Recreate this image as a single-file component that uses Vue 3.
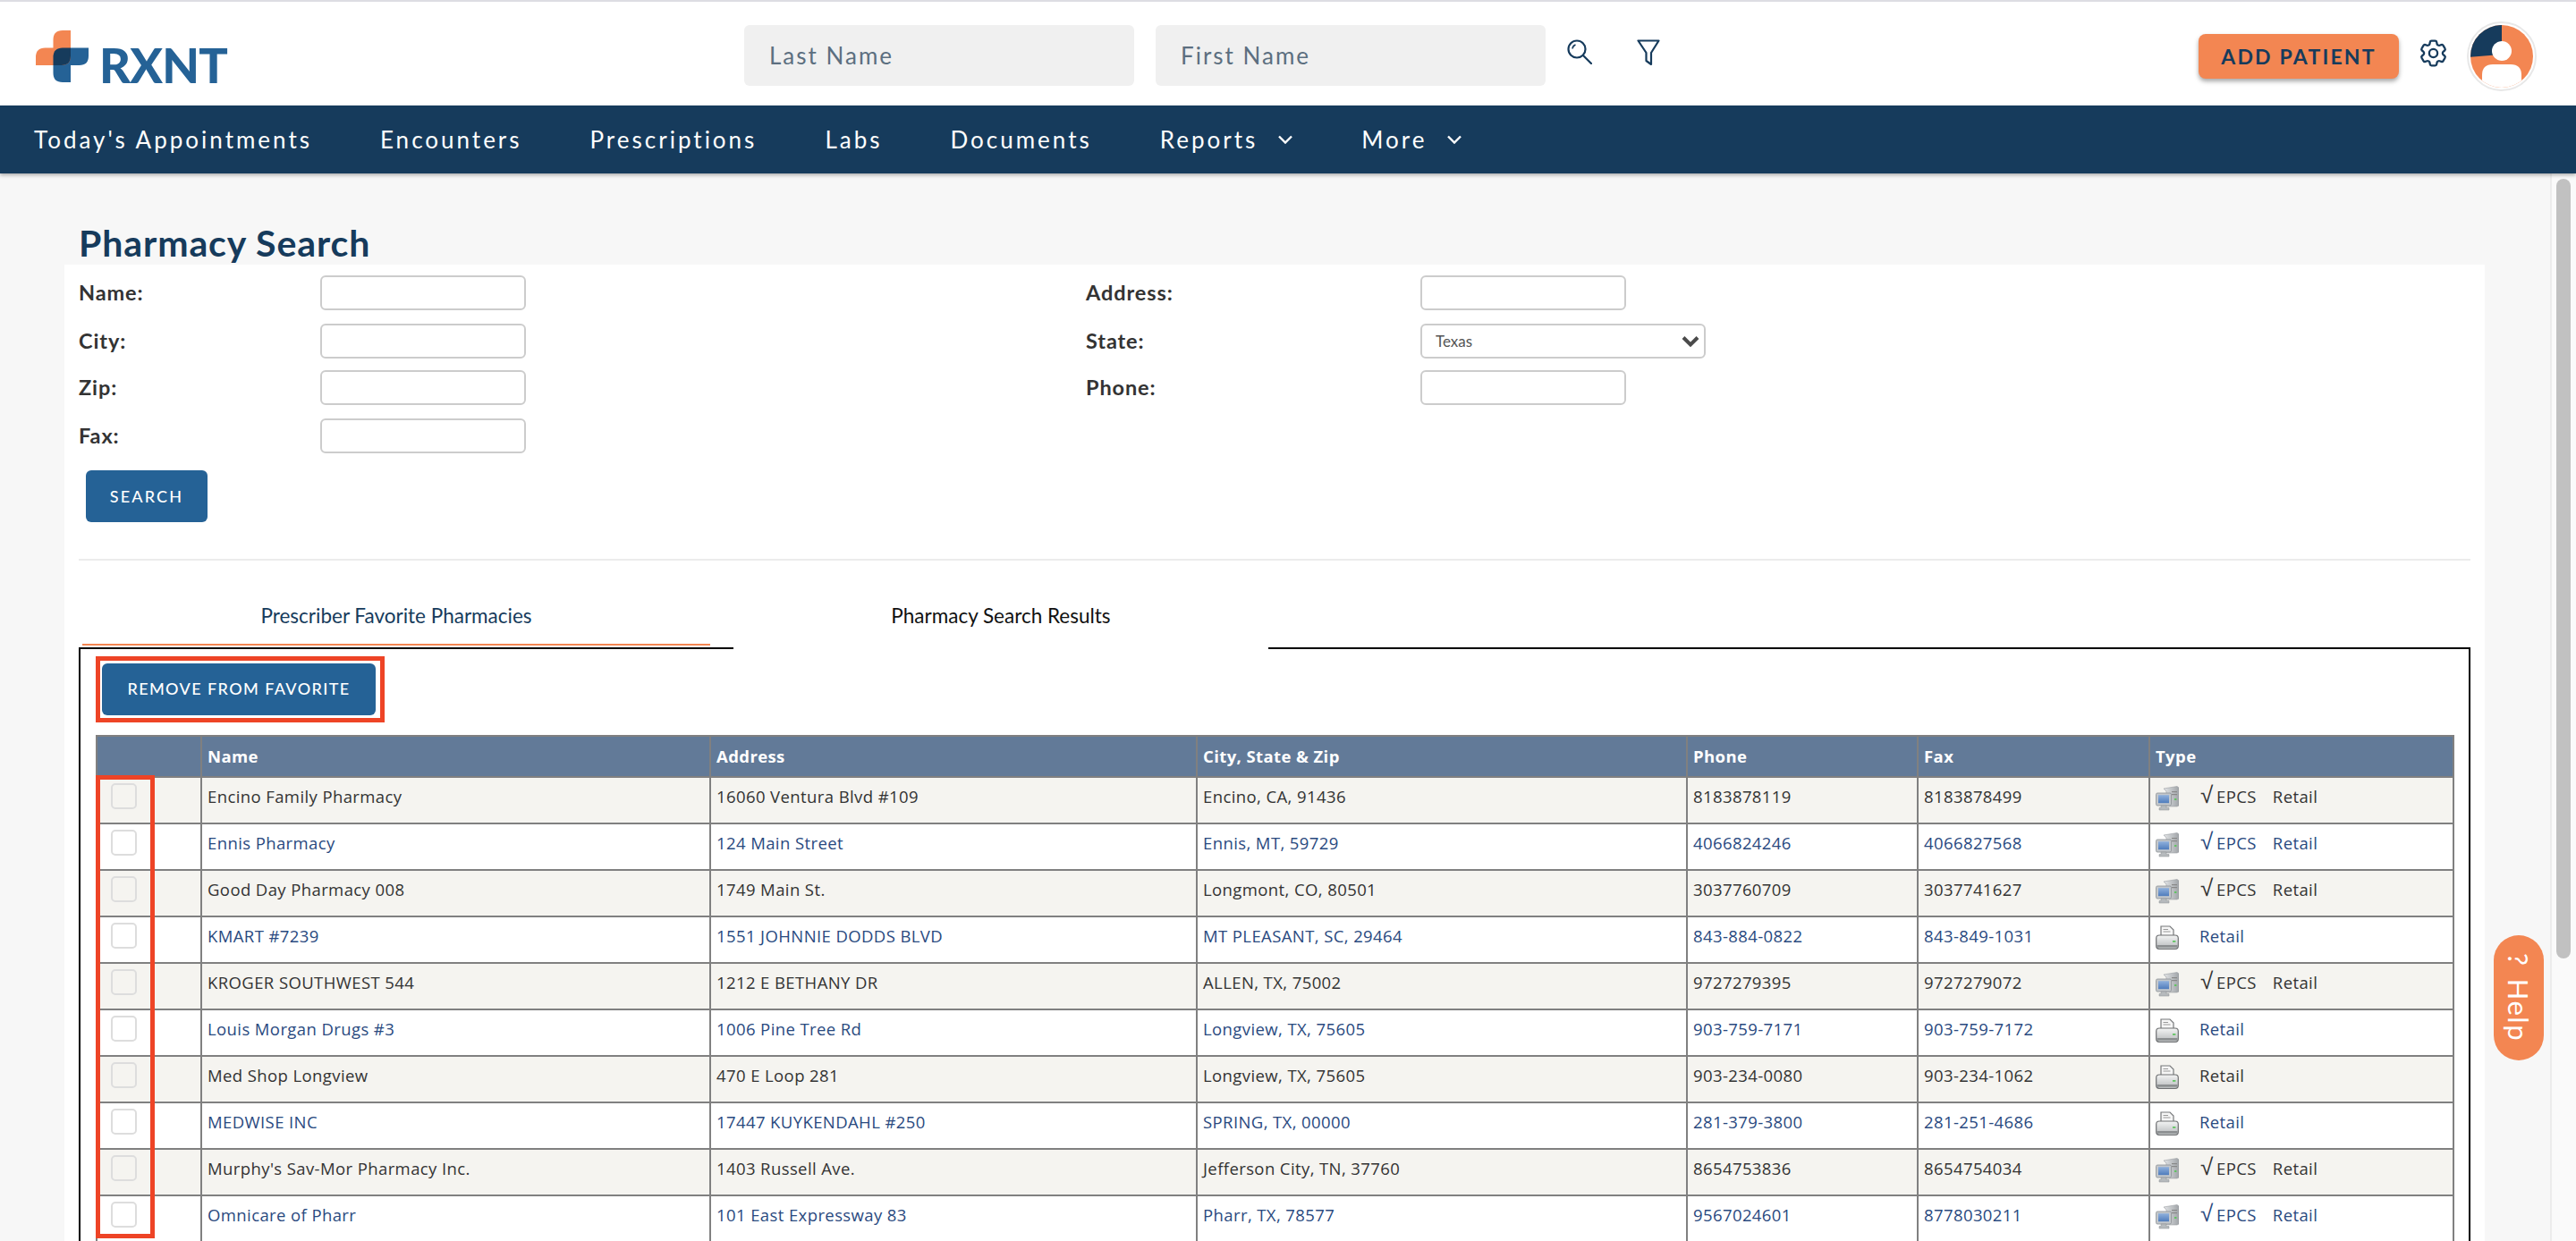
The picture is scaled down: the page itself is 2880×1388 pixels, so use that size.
<script setup>
const navItems = [
  { label: "Today's Appointments" },
  { label: "Encounters" },
  { label: "Prescriptions" },
  { label: "Labs" },
  { label: "Documents" },
  { label: "Reports", menu: true },
  { label: "More", menu: true }
];

const pharmacies = [
  { name: "Encino Family Pharmacy", address: "16060 Ventura Blvd #109", city: "Encino, CA, 91436", phone: "8183878119", fax: "8183878499", epcs: true },
  { name: "Ennis Pharmacy", address: "124 Main Street", city: "Ennis, MT, 59729", phone: "4066824246", fax: "4066827568", epcs: true },
  { name: "Good Day Pharmacy 008", address: "1749 Main St.", city: "Longmont, CO, 80501", phone: "3037760709", fax: "3037741627", epcs: true },
  { name: "KMART #7239", address: "1551 JOHNNIE DODDS BLVD", city: "MT PLEASANT, SC, 29464", phone: "843-884-0822", fax: "843-849-1031", epcs: false },
  { name: "KROGER SOUTHWEST 544", address: "1212 E BETHANY DR", city: "ALLEN, TX, 75002", phone: "9727279395", fax: "9727279072", epcs: true },
  { name: "Louis Morgan Drugs #3", address: "1006 Pine Tree Rd", city: "Longview, TX, 75605", phone: "903-759-7171", fax: "903-759-7172", epcs: false },
  { name: "Med Shop Longview", address: "470 E Loop 281", city: "Longview, TX, 75605", phone: "903-234-0080", fax: "903-234-1062", epcs: false },
  { name: "MEDWISE INC", address: "17447 KUYKENDAHL #250", city: "SPRING, TX, 00000", phone: "281-379-3800", fax: "281-251-4686", epcs: false },
  { name: "Murphy's Sav-Mor Pharmacy Inc.", address: "1403 Russell Ave.", city: "Jefferson City, TN, 37760", phone: "8654753836", fax: "8654754034", epcs: true },
  { name: "Omnicare of Pharr", address: "101 East Expressway 83", city: "Pharr, TX, 78577", phone: "9567024601", fax: "8778030211", epcs: true }
];
</script>

<template>
  <div class="app">
    <!-- Header -->
    <header class="topbar">
      <div class="logo">
        <svg class="logo-mark" viewBox="0 0 59 58" width="59" height="58">
          <path d="M30 19.5H59V28.5Q59 39 48.5 39H39V58H30Q19.5 58 19.5 47.5V30Q19.5 19.5 30 19.5Z" fill="#256296" />
          <path d="M0 39V30Q0 19.5 10.5 19.5H19.5V10.5Q19.5 0 30 0H39V28.5Q39 39 28.5 39Z" fill="#f38652" />
          <path d="M19.5 39V30Q19.5 19.5 30 19.5H39V28.5Q39 39 28.5 39Z" fill="#163b5c" />
        </svg>
        <span class="logo-text">RXNT</span>
      </div>
      <input class="top-input" placeholder="Last Name" />
      <input class="top-input" placeholder="First Name" />
      <svg class="top-icon search-icon" viewBox="0 0 28 28" width="28" height="28" fill="none" stroke="#163b5c" stroke-width="2.2">
        <circle cx="11" cy="11" r="9.5" />
        <path d="M18 18L27 27" stroke-linecap="round" />
        <path d="M6 10.5Q6.5 7 9.5 6" stroke-width="1.6" />
      </svg>
      <svg class="top-icon filter-icon" viewBox="0 0 26 30" width="26" height="30" fill="none" stroke="#163b5c" stroke-width="2.2" stroke-linejoin="round">
        <path d="M1.5 1.5H24.5L16 15V28L10.5 24V15Z" />
      </svg>
      <div class="top-right">
        <button class="add-btn">ADD PATIENT</button>
        <svg class="gear" viewBox="0 0 24 24" width="37" height="37" fill="none" stroke="#163b5c" stroke-width="1.5">
          <path d="M9.594 3.94c.09-.542.56-.94 1.11-.94h2.593c.55 0 1.02.398 1.11.94l.213 1.281c.063.374.313.686.645.87.074.04.147.083.22.127.325.196.72.257 1.075.124l1.217-.456a1.125 1.125 0 0 1 1.37.49l1.296 2.247a1.125 1.125 0 0 1-.26 1.431l-1.003.827c-.293.241-.438.613-.43.992a7.723 7.723 0 0 1 0 .255c-.008.378.137.75.43.991l1.004.827c.424.35.534.955.26 1.43l-1.298 2.247a1.125 1.125 0 0 1-1.369.491l-1.217-.456c-.355-.133-.75-.072-1.076.124a6.47 6.47 0 0 1-.22.128c-.331.183-.581.495-.644.869l-.213 1.281c-.09.543-.56.94-1.11.94h-2.594c-.55 0-1.019-.398-1.11-.94l-.213-1.281c-.062-.374-.312-.686-.644-.87a6.52 6.52 0 0 1-.22-.127c-.325-.196-.72-.257-1.076-.124l-1.217.456a1.125 1.125 0 0 1-1.369-.49l-1.297-2.247a1.125 1.125 0 0 1 .26-1.431l1.004-.827c.292-.24.437-.613.43-.991a6.932 6.932 0 0 1 0-.255c.007-.38-.138-.751-.43-.992l-1.004-.827a1.125 1.125 0 0 1-.26-1.43l1.297-2.247a1.125 1.125 0 0 1 1.37-.491l1.216.456c.356.133.751.072 1.076-.124.072-.044.146-.086.22-.128.332-.183.582-.495.644-.869l.214-1.28Z" />
          <path d="M15 12a3 3 0 1 1-6 0 3 3 0 0 1 6 0Z" />
        </svg>
        <svg class="avatar" viewBox="0 0 78 78" width="78" height="78">
          <defs>
            <clipPath id="avatarClip"><circle cx="39" cy="39" r="35" /></clipPath>
          </defs>
          <circle cx="39" cy="39" r="38" fill="#fff" stroke="#e8e8e8" stroke-width="2" />
          <g clip-path="url(#avatarClip)">
            <rect width="78" height="78" fill="#f38652" />
            <path d="M39 0H0V40L39 37Z" fill="#163b5c" />
            <circle cx="39" cy="33" r="11" fill="#fff" />
            <path d="M17 78V60Q17 48 29 48H49Q61 48 61 60V78Z" fill="#fff" />
          </g>
        </svg>
      </div>
    </header>

    <nav class="navbar">
      <a v-for="item in navItems" :key="item.label" class="nav-item">
        {{ item.label }}
        <svg v-if="item.menu" class="nav-caret" viewBox="0 0 18 10" width="18" height="10" fill="none" stroke="#fff" stroke-width="2.4">
          <path d="M2 1.5L9 8.5L16 1.5" />
        </svg>
      </a>
    </nav>

    <div class="content">
      <main class="page">
        <h1 class="page-title">Pharmacy Search</h1>
        <section class="panel">
          <!-- Search form -->
          <div class="search-form">
            <label>Name:</label>
            <input class="field" />
            <label>Address:</label>
            <input class="field" />

            <label>City:</label>
            <input class="field" />
            <label>State:</label>
            <div class="select-wrap">
              <select class="field state">
                <option>Texas</option>
              </select>
              <svg class="select-caret" viewBox="0 0 20 14" width="20" height="14" fill="none" stroke="#4a4a4a" stroke-width="4">
                <path d="M2 2.5L10 10.5L18 2.5" />
              </svg>
            </div>

            <label>Zip:</label>
            <input class="field" />
            <label>Phone:</label>
            <input class="field" />

            <label>Fax:</label>
            <input class="field" />
          </div>
          <button class="btn search-btn">SEARCH</button>
          <hr class="divider" />

          <!-- Tabs -->
          <div class="tabs">
            <div class="tab tab-active">Prescriber Favorite Pharmacies</div>
            <div class="tab tab-plain">Pharmacy Search Results</div>
          </div>
          <div class="tab-box">
            <div class="remove-mark">
              <button class="btn remove-btn">REMOVE FROM FAVORITE</button>
            </div>

            <div class="table-wrap">
              <table class="results">
                <colgroup>
                  <col style="width: 117px" />
                  <col style="width: 569px" />
                  <col style="width: 544px" />
                  <col style="width: 548px" />
                  <col style="width: 258px" />
                  <col style="width: 259px" />
                  <col style="width: 340px" />
                </colgroup>
                <thead>
                  <tr>
                    <th></th>
                    <th>Name</th>
                    <th>Address</th>
                    <th>City, State &amp; Zip</th>
                    <th>Phone</th>
                    <th>Fax</th>
                    <th>Type</th>
                  </tr>
                </thead>
                <tbody>
                  <tr v-for="(p, i) in pharmacies" :key="p.name" :class="i % 2 ? 'row-even' : 'row-odd'">
                    <td class="check-cell"><input type="checkbox" class="row-check" /></td>
                    <td>{{ p.name }}</td>
                    <td>{{ p.address }}</td>
                    <td>{{ p.city }}</td>
                    <td>{{ p.phone }}</td>
                    <td>{{ p.fax }}</td>
                    <td>
                      <div class="type-cell">
                        <svg v-if="p.epcs" class="type-icon" viewBox="0 0 26 28" width="26" height="28">
                          <defs>
                            <linearGradient id="towerGrad" x1="0" y1="0" x2="1" y2="0">
                              <stop offset="0" stop-color="#e4e6e8" />
                              <stop offset="1" stop-color="#a0a4a8" />
                            </linearGradient>
                            <linearGradient id="screenGrad" x1="0" y1="0" x2="0" y2="1">
                              <stop offset="0" stop-color="#8fb0dc" />
                              <stop offset="1" stop-color="#4f7cbc" />
                            </linearGradient>
                          </defs>
                          <path d="M9 3L24 0.5L26 2V22L24 23H12V6Z" fill="url(#towerGrad)" stroke="#9a9ea2" stroke-width="0.6" />
                          <rect x="18" y="6" width="6" height="1.2" fill="#888" />
                          <rect x="18" y="9" width="6" height="1.2" fill="#888" />
                          <rect x="21" y="14" width="2.4" height="2" fill="#62c462" />
                          <rect x="0.5" y="8" width="17" height="14" rx="1.6" fill="#c3c7cb" stroke="#8c9094" stroke-width="0.8" />
                          <rect x="3" y="10.2" width="12" height="9" fill="url(#screenGrad)" />
                          <path d="M6 22H12V24.5H15V27H4V24.5H6Z" fill="#b6babd" stroke="#8c9094" stroke-width="0.5" />
                        </svg>
                        <svg v-else class="type-icon" viewBox="0 0 26 28" width="26" height="28">
                          <defs>
                            <linearGradient id="printerGrad" x1="0" y1="0" x2="0" y2="1">
                              <stop offset="0" stop-color="#f4f5f5" />
                              <stop offset="1" stop-color="#b4b7b9" />
                            </linearGradient>
                          </defs>
                          <path d="M6 13V1H16L20 5V13Z" fill="#f6f6f6" stroke="#77797b" stroke-width="1.2" />
                          <path d="M8.5 4.5H14M8.5 7H16.5" stroke="#999" stroke-width="1" />
                          <rect x="0.7" y="11" width="24.6" height="15.5" rx="3.4" fill="url(#printerGrad)" stroke="#6f7173" stroke-width="1.2" />
                          <rect x="19" y="17" width="3.4" height="1.8" fill="#62c462" />
                          <rect x="1.5" y="22" width="23" height="2.6" fill="#8c8f91" />
                        </svg>
                        <span v-if="p.epcs" class="epcs"><span class="radical">√</span>EPCS</span>
                        <span>Retail</span>
                      </div>
                    </td>
                  </tr>
                </tbody>
              </table>
              <div class="check-mark"></div>
            </div>
          </div>
        </section>
      </main>

      <div class="scroll-track">
        <div class="scroll-thumb"></div>
      </div>
    </div>

    <button class="help-tab">? Help</button>
  </div>
</template>

<style>
html, body {
  margin: 0;
  overflow: hidden;
}
</style>

<style scoped>
.app {
  height: 100vh;
  overflow: hidden;
  display: flex;
  flex-direction: column;
  font-family: Lato, "Open Sans", sans-serif;
  background: #fff;
  color: #333;
}

/* top bar */
.topbar {
  height: 116px;
  flex: none;
  border-top: 2px solid #dddde3;
  display: flex;
  align-items: center;
  background: #fff;
}

.logo {
  width: 792px;
  padding-left: 40px;
  display: flex;
  align-items: flex-end;
  gap: 12px;
  height: 58px;
  margin-top: 6px;
}

.logo-text {
  font-size: 54px;
  line-height: 39px;
  height: 39px;
  font-weight: 900;
  color: #256296;
  letter-spacing: -0.8px;
}

.top-input {
  width: 436px;
  height: 68px;
  box-sizing: border-box;
  margin-right: 24px;
  margin-top: 4px;
  border: none;
  border-radius: 6px;
  background: #f0f0f0;
  padding-left: 28px;
  font: 400 26px Lato, sans-serif;
  letter-spacing: 2px;
}

.top-input::placeholder {
  color: #5c6f80;
  opacity: 1;
}

.search-icon {
  margin-left: 0;
  margin-top: -4px;
}

.filter-icon {
  margin-left: 50px;
  margin-top: -2px;
}

.top-right {
  margin-left: auto;
  padding-right: 44px;
  display: flex;
  align-items: center;
  margin-top: 6px;
}

.add-btn {
  width: 224px;
  height: 50px;
  border: none;
  border-radius: 8px;
  background: #f38652;
  color: #163b5c;
  font: 700 23px Lato, sans-serif;
  letter-spacing: 2.2px;
  box-shadow: 0 3px 5px rgba(0, 0, 0, 0.35);
  padding: 0;
}

.gear {
  margin-left: 20px;
  margin-right: 19px;
  margin-top: -8px;
}

.avatar {
  display: block;
}

/* nav */
.navbar {
  height: 76px;
  flex: none;
  background: #163b5c;
  box-shadow: 0 2px 4px rgba(0, 0, 0, 0.3);
  position: relative;
  display: flex;
  align-items: center;
  gap: 76px;
  padding-left: 38px;
}

.nav-item {
  color: #fff;
  font-size: 26px;
  font-weight: 400;
  letter-spacing: 3px;
  white-space: nowrap;
  display: flex;
  align-items: center;
}

.nav-caret {
  margin-left: 22px;
}

/* page */
.content {
  flex: 1;
  min-height: 0;
  display: flex;
}

.page {
  width: 2851px;
  flex: none;
  background: #f7f7f7;
}

.page-title {
  margin: 0;
  height: 102px;
  box-sizing: border-box;
  padding: 55px 0 0 88px;
  font-size: 41px;
  line-height: 46px;
  font-weight: 700;
  letter-spacing: 0.9px;
  color: #163b5c;
}

.panel {
  margin-left: 72px;
  width: 2706px;
  box-sizing: border-box;
  padding: 12px 16px 0;
  background: #fff;
}

.search-form {
  display: grid;
  grid-template-columns: 270px 856px 374px 1fr;
  grid-template-rows: 54px 52px 54px 39px;
  justify-items: start;
}

.search-form label {
  font-size: 23.5px;
  font-weight: 700;
  letter-spacing: 0.9px;
  line-height: 39px;
  color: #333;
}

.field {
  width: 230px;
  height: 39px;
  box-sizing: border-box;
  border: 2px solid #ccc;
  border-radius: 6px;
  background: #fff;
}

.select-wrap {
  position: relative;
}

.state {
  width: 319px;
  appearance: none;
  padding-left: 15px;
  font: 400 17px Lato, sans-serif;
  color: #555;
}

.select-caret {
  position: absolute;
  right: 7px;
  top: 13px;
}

.btn {
  border: none;
  border-radius: 6px;
  background: #256296;
  color: #fff;
  font: 500 18px Lato, sans-serif;
  letter-spacing: 1.4px;
  padding: 0;
}

.search-btn {
  display: block;
  width: 136px;
  height: 58px;
  margin: 19px 0 0 8px;
  letter-spacing: 2.2px;
}

.divider {
  margin: 41px 0 0;
  border: none;
  height: 2px;
  background: #ececec;
}

/* tabs */
.tabs {
  height: 97px;
  display: flex;
}

.tab {
  box-sizing: border-box;
  text-align: center;
  font-size: 22.5px;
  padding-top: 49px;
  line-height: 26px;
  background: #fff;
}

.tab-active {
  width: 702px;
  height: 95px;
  margin-left: 4px;
  color: #163b5c;
  border-bottom: 2px solid #f38652;
}

.tab-plain {
  width: 598px;
  height: 99px;
  margin-left: 26px;
  color: #111;
  position: relative;
}

.tab-box {
  box-sizing: border-box;
  border: 2px solid #000;
  padding: 8px 17px 0;
  height: 800px;
}

.remove-mark {
  display: inline-flex;
  border: 5px solid #ee4426;
  padding: 3px 5px 3px 2px;
}

.remove-btn {
  width: 306px;
  height: 58px;
  padding-bottom: 2px;
}

.table-wrap {
  position: relative;
  margin-top: 14px;
  width: 2635px;
}

.results {
  table-layout: fixed;
  width: 2635px;
  border-collapse: collapse;
  font-family: "Open Sans", sans-serif;
  font-size: 18.5px;
  line-height: 24px;
  letter-spacing: 0.4px;
}

.results th,
.results td {
  border: 2px solid #808080;
  padding: 0 6px;
  text-align: left;
  box-sizing: border-box;
  white-space: nowrap;
}

.results th {
  height: 46px;
  background: #627a98;
  color: #fff;
  font-weight: 700;
  vertical-align: middle;
}

.results td {
  height: 52px;
  vertical-align: top;
  padding-top: 9px;
}

.row-odd td {
  background: #f5f4f0;
  color: #333;
}

.row-even td {
  background: #fff;
  color: #2a4a7f;
}

.results .check-cell {
  padding: 6px 0 0 15px;
}

.row-check {
  appearance: none;
  display: block;
  width: 29px;
  height: 29px;
  margin: 0;
  box-sizing: border-box;
  border: 2px solid #ddd;
  border-radius: 5px;
  background: transparent;
}

.type-cell {
  display: flex;
  align-items: flex-start;
}

.type-icon {
  flex: none;
  margin-right: 23px;
  margin-top: 0;
}

.epcs {
  margin-left: 1px;
  margin-right: 18px;
}

.radical {
  display: inline-block;
  width: 18px;
  font-family: "DejaVu Sans", sans-serif;
  font-size: 26px;
  line-height: 0;
  font-weight: 300;
}

/* red highlight over the check column */
.check-mark {
  position: absolute;
  left: 0;
  top: 45px;
  width: 66px;
  height: 518px;
  box-sizing: border-box;
  border: 5px solid #ee4426;
  pointer-events: none;
}

/* fake page scrollbar */
.scroll-track {
  flex: 1;
  box-sizing: border-box;
  border-left: 2px solid #ececec;
  background: #fafafa;
  padding: 6px 0 0 5px;
}

.scroll-thumb {
  width: 16px;
  height: 872px;
  border-radius: 8px;
  background: #c1c1c1;
}

.help-tab {
  position: fixed;
  right: 36px;
  top: 1046px;
  width: 56px;
  height: 140px;
  border: none;
  border-radius: 28px;
  background: #f38652;
  color: #fff;
  font: 400 31px Lato, sans-serif;
  letter-spacing: 1.5px;
  word-spacing: 4px;
  writing-mode: vertical-rl;
  padding: 0;
  text-align: center;
}
</style>
